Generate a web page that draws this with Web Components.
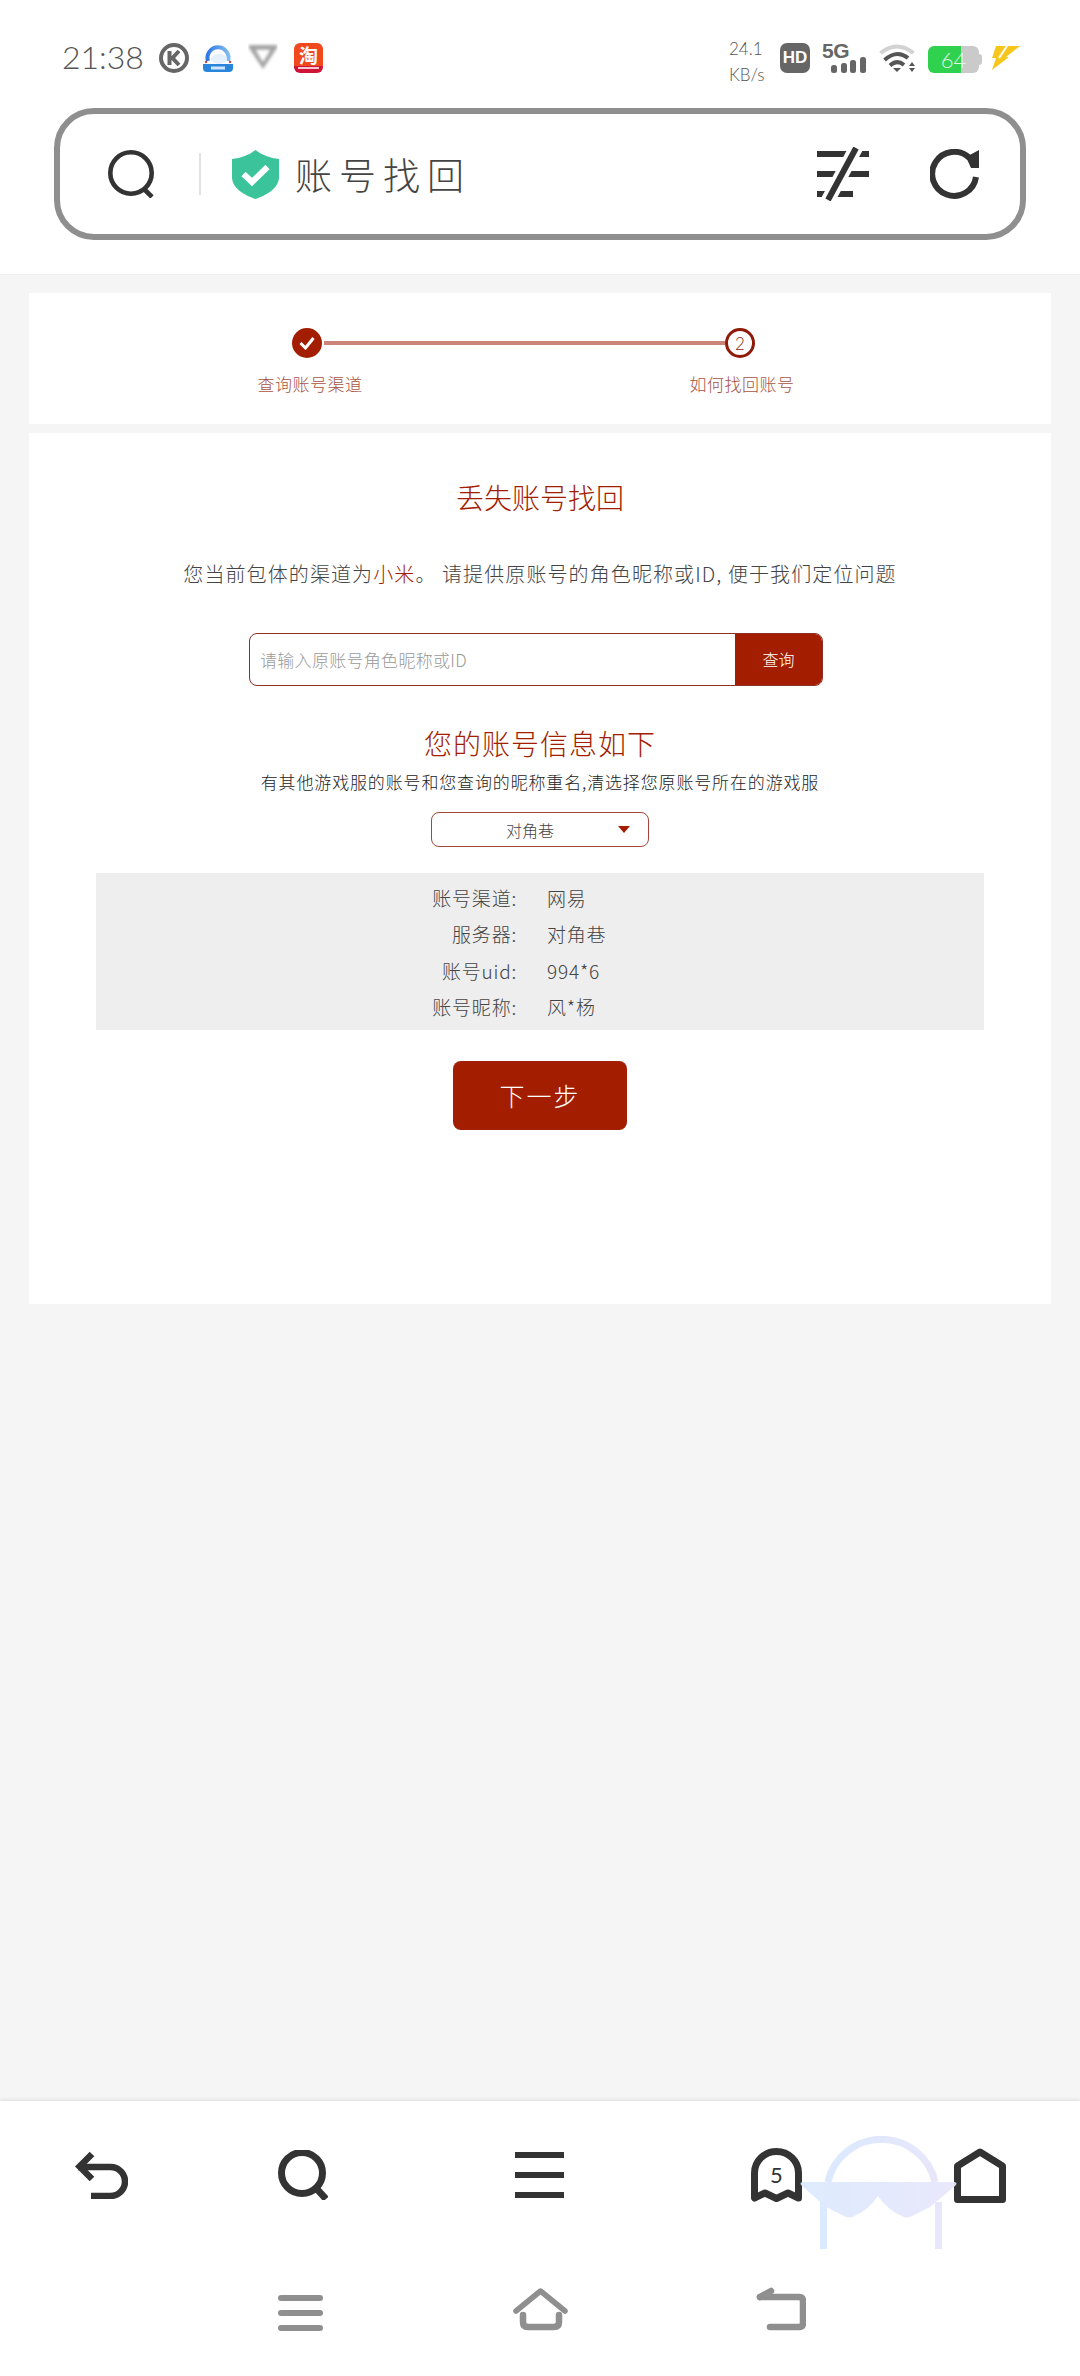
<!DOCTYPE html>
<html lang="zh-CN">
<head>
<meta charset="utf-8">
<title>账号找回</title>
<style>
  html, body { margin: 0; padding: 0; }
  body {
    width: 1080px;
    height: 2376px;
    overflow: hidden;
    background: #f5f5f5;
    font-family: "Noto Sans CJK SC", "Noto Sans", sans-serif;
    font-weight: 300;
    display: flex;
    flex-direction: column;
  }
</style>
</head>
<body>
<browser-header></browser-header>
<step-card></step-card>
<recover-card></recover-card>
<bottom-nav></bottom-nav>

<script>
class BrowserHeader extends HTMLElement {
  connectedCallback() {
    this.attachShadow({ mode: 'open' });
    this.shadowRoot.innerHTML = `
      <style>
        :host {
          display: block;
          height: 275px;
          background: #fff;
          border-bottom: 1px solid #f0f0f0;
          box-sizing: border-box;
        }
        .status {
          height: 108px;
          box-sizing: border-box;
          padding: 43px 60px 0 62px;
          display: flex;
          align-items: flex-start;
          color: #666;
        }
        .time {
          font: 300 32px/28px Lato, sans-serif;
          letter-spacing: 0;
          width: 97px;
          color: #555;
        }
        .status svg { display: block; flex: none; }
        .taobao {
          width: 29px;
          height: 30px;
          margin-left: 16px;
          border-radius: 6px;
          background: linear-gradient(#f0491e 0 76%, #cf1437 76%);
          color: #fff;
          font: 700 19px/23px "Noto Sans CJK SC", sans-serif;
          text-align: center;
        }
        .taobao i { display: block; height: 2px; margin: 1px 4px 0; background: #f5c9cf; }
        .grow { flex: 1; }
        .speed {
          width: 51px;
          margin-top: -7px;
          font: 300 17px/26px Lato, sans-serif;
          color: #555;
        }
        .hd {
          width: 30px;
          height: 30px;
          border-radius: 7px;
          background: #666;
          color: #fff;
          font: 700 17px/30px "Liberation Sans", sans-serif;
          text-align: center;
        }
        .net { width: 43px; margin-left: 12px; height: 30px; display: flex; flex-direction: column; }
        .net b { font: 700 21px/15px "Liberation Sans", sans-serif; letter-spacing: -.5px; }
        .net svg { margin: -1px 0 0 9px; }
        .battery {
          margin: 3px 0 0 12px;
          width: 51px;
          height: 27px;
          border-radius: 6px;
          background: linear-gradient(90deg, #2fd14e 0 33px, #cacaca 33px);
          color: #dff8e4;
          font: 300 22px/27px Lato, sans-serif;
          text-align: center;
          position: relative;
        }
        .battery::after {
          content: '';
          position: absolute;
          right: -3px;
          top: 8px;
          width: 3px;
          height: 11px;
          border-radius: 0 3px 3px 0;
          background: #cacaca;
        }
        .bar {
          margin: 0 54px;
          height: 132px;
          box-sizing: border-box;
          border: 6px solid #8f8f8f;
          border-radius: 40px;
          display: flex;
          align-items: center;
          padding-left: 48px;
        }
        .bar svg { display: block; flex: none; }
        .sep { width: 2px; height: 42px; background: #e2e2e2; margin: 0 31px 0 43px; flex: none; }
        .title {
          margin-left: 16px;
          font-size: 37px;
          line-height: 42px;
          letter-spacing: 7px;
          color: #444;
          flex: 1;
        }
      </style>
      <div class="status">
        <span class="time">21:38</span>
        <svg width="30" height="30" viewBox="0 0 30 30">
          <circle cx="15" cy="15" r="13" fill="none" stroke="#666" stroke-width="4"/>
          <path d="M10.500 8v14M20 8l-6.500 7 6.500 7" fill="none" stroke="#666" stroke-width="4"/>
        </svg>
        <svg style="margin-left:14px" width="30" height="30" viewBox="0 0 30 30">
          <defs>
            <linearGradient id="ring" x1="0" x2="1" y1="0" y2="0">
              <stop offset="0" stop-color="#2f79e6"/><stop offset="1" stop-color="#7fbcf0"/>
            </linearGradient>
          </defs>
          <path d="M5 18A10.500 10.500 0 1 1 25 18" fill="none" stroke="url(#ring)" stroke-width="4"/>
          <ellipse cx="16" cy="16" rx="8" ry="5" fill="#e4f0fb"/>
          <path d="M0 21h30v4q0 4-4 4H4q-4 0-4-4z" fill="#2a86dc"/>
          <path d="M8 25h14" stroke="#cfe6fa" stroke-width="3"/>
          <circle cx="3" cy="19" r="1.200" fill="#d6453a"/><circle cx="27" cy="19" r="1.200" fill="#d6453a"/>
        </svg>
        <svg style="margin-left:15px" width="30" height="28" viewBox="0 0 30 28">
          <filter id="soft"><feGaussianBlur stdDeviation="1.600"/></filter>
          <g filter="url(#soft)">
            <path d="M1 2h28v3L15 26 1 5z" fill="#a4a4a4"/>
            <path d="M8 7h14l-7 12z" fill="#fff"/>
          </g>
        </svg>
        <div class="taobao">淘<i></i></div>
        <span class="grow"></span>
        <div class="speed">24.1<br>KB/s</div>
        <div class="hd">HD</div>
        <div class="net">
          <b>5G</b>
          <svg width="35" height="16" viewBox="0 0 35 16" fill="#666">
            <rect x="0" y="8" width="6" height="8" rx="2.500"/>
            <rect x="10" y="6" width="6" height="10" rx="2.500"/>
            <rect x="19" y="3" width="6" height="13" rx="2.500"/>
            <rect x="29" y="0" width="6" height="16" rx="2.500"/>
          </svg>
        </div>
        <svg style="margin-left:14px" width="37" height="30" viewBox="0 0 37 30">
          <path d="M1.500 10Q18-3 34.500 10" fill="none" stroke="#d2d2d2" stroke-width="4"/>
          <path d="M5.500 17Q18 6 29 15" fill="none" stroke="#555" stroke-width="4"/>
          <path d="M11 22.500Q18 16 25 22" fill="none" stroke="#555" stroke-width="4"/>
          <path d="M14 25h8l-4 4zM30 23l3-4 3 4zM30 25h6l-3 4z" fill="#555"/>
        </svg>
        <div class="battery">64</div>
        <svg style="margin:2px 0 0 12px" width="29" height="26" viewBox="0 0 29 26">
          <path d="M5 1h24L15 12l3 0L1 25l4-12H1z" fill="#f6c61d"/>
          <path d="M16 1L8 13" stroke="#fff" stroke-width="2"/>
        </svg>
      </div>
      <div class="bar">
        <svg width="48" height="48" viewBox="0 0 48 48">
          <circle cx="23" cy="23" r="20.700" fill="none" stroke="#333" stroke-width="4.600"/>
          <path d="M35 38l9 9" stroke="#333" stroke-width="4.600"/>
        </svg>
        <span class="sep"></span>
        <svg width="47" height="49" viewBox="0 0 47 49">
          <path d="M23.500 0C30 5 38 8 47 9V27C47 38 35 45 23.500 49 12 45 0 38 0 27V9C9 8 17 5 23.500 0Z" fill="#3bc49b"/>
          <path d="M11.500 24l8.500 8 15.500-15" fill="none" stroke="#fff" stroke-width="6"/>
        </svg>
        <span class="title">账号找回</span>
        <svg width="52" height="54" viewBox="0 0 52 54">
          <path d="M0 7h52M0 27h52M0 47h36" stroke="#333" stroke-width="6"/>
          <path d="M39 1L11 53" stroke="#fff" stroke-width="14"/>
          <path d="M39 1L11 53" stroke="#333" stroke-width="6"/>
        </svg>
        <svg style="margin:0 40px 0 61px" width="50" height="50" viewBox="0 0 50 50">
          <path d="M46 28A22 22 0 1 1 39.500 9" fill="none" stroke="#333" stroke-width="6"/>
          <path d="M49 1V19H41L36 8Z" fill="#333"/>
        </svg>
      </div>
    `;
  }
}

class StepCard extends HTMLElement {
  connectedCallback() {
    this.attachShadow({ mode: 'open' });
    this.shadowRoot.innerHTML = `
      <style>
        :host {
          display: block;
          margin: 18px 29px 0;
          height: 131px;
          background: #fff;
          box-sizing: border-box;
          padding-top: 35px;
          color: #a85243;
          font-size: 17px;
        }
        .track {
          display: flex;
          align-items: center;
          padding-left: 263px;
        }
        .dot {
          width: 30px;
          height: 30px;
          box-sizing: border-box;
          border-radius: 50%;
          flex: none;
          display: flex;
          align-items: center;
          justify-content: center;
        }
        .done { background: #a31d00; }
        .next { border: 3px solid #8f1a08; color: #8f1a08; font: 300 17px/1 Lato, sans-serif; }
        .line { width: 401px; height: 4px; margin: 0 0 0 2px; background: #cc8479; }
        .labels {
          display: grid;
          grid-template-columns: 200px 200px;
          column-gap: 232px;
          padding-left: 181px;
          margin-top: 14px;
          line-height: 24px;
          text-align: center;
          letter-spacing: .5px;
        }
      </style>
      <div class="track">
        <span class="dot done">
          <svg width="16" height="14" viewBox="0 0 16 14"><path d="M1.500 7l5 5 8-10" fill="none" stroke="#fff" stroke-width="3"/></svg>
        </span>
        <span class="line"></span>
        <span class="dot next">2</span>
      </div>
      <div class="labels"><span>查询账号渠道</span><span>如何找回账号</span></div>
    `;
  }
}

class InfoTable extends HTMLElement {
  connectedCallback() {
    this.attachShadow({ mode: 'open' });
    const rows = [['账号渠道:', '网易'], ['服务器:', '对角巷'], ['账号uid:', '994*6'], ['账号昵称:', '风*杨']];
    this.shadowRoot.innerHTML = `
      <style>
        :host {
          display: grid;
          grid-template-columns: 421px 1fr;
          grid-auto-rows: 36.500px;
          column-gap: 30px;
          align-items: center;
          padding: 6px 0 5px;
          background: #eee;
          color: #444;
          font-size: 19px;
          letter-spacing: .8px;
          margin-top: 26px;
          text-align: left;
        }
        .k { text-align: right; }
      </style>
      ${rows.map(r => `<span class="k">${r[0]}</span><span>${r[1]}</span>`).join('')}
    `;
  }
}

class RecoverCard extends HTMLElement {
  connectedCallback() {
    this.attachShadow({ mode: 'open' });
    this.shadowRoot.innerHTML = `
      <style>
        :host {
          display: block;
          margin: 9px 29px 0;
          height: 871px;
          background: #fff;
          box-sizing: border-box;
          padding: 44px 67px 0;
          text-align: center;
          color: #444;
        }
        h1, h2, p { margin: 0; font-weight: 300; }
        h1 { font-size: 28px; line-height: 40px; color: #a31d00; }
        .lead { margin-top: 42px; font-size: 20px; line-height: 30px; color: #444; white-space: nowrap; letter-spacing: 1.100px; }
        .lead em { font-style: normal; color: #a31d00; }
        .query {
          margin: 44px 0 0 153px;
          width: 574px;
          height: 53px;
          display: flex;
          box-sizing: border-box;
          border: 1px solid #8f3024;
          border-radius: 8px;
          overflow: hidden;
          font-size: 17px;
        }
        .query span { flex: 1; text-align: left; padding-left: 10px; line-height: 51px; color: #999; letter-spacing: .3px; }
        .query b { width: 87px; background: #a31d00; color: #fff; font-weight: 300; line-height: 51px; font-size: 16px; }
        h2 { margin-top: 37px; font-size: 28px; line-height: 40px; color: #a31d00; letter-spacing: 1px; }
        .hint { margin-top: 7px; font-size: 17px; line-height: 24px; color: #222; white-space: nowrap; letter-spacing: .85px; }
        .pick {
          margin: 18px auto 0;
          width: 218px;
          height: 35px;
          box-sizing: border-box;
          border: 1px solid #a3473a;
          border-radius: 8px;
          display: flex;
          align-items: center;
          justify-content: space-between;
          padding: 0 18px 0 74px;
          font-size: 16px;
          color: #444;
        }
        .pick i { width: 0; height: 0; border: 6px solid transparent; border-top: 7px solid #a31d00; border-bottom: 0; }
        .go {
          margin: 31px auto 0;
          width: 174px;
          height: 69px;
          border-radius: 8px;
          background: #a31d00;
          color: #fff;
          font-size: 25px;
          line-height: 69px;
          letter-spacing: 2px;
        }
      </style>
      <h1>丢失账号找回</h1>
      <p class="lead">您当前包体的渠道为<em>小米</em>。 请提供原账号的角色昵称或ID, 便于我们定位问题</p>
      <div class="query"><span>请输入原账号角色昵称或ID</span><b>查询</b></div>
      <h2>您的账号信息如下</h2>
      <p class="hint">有其他游戏服的账号和您查询的昵称重名,清选择您原账号所在的游戏服</p>
      <div class="pick"><span>对角巷</span><i></i></div>
      <info-table></info-table>
      <div class="go">下一步</div>
    `;
  }
}

class BottomNav extends HTMLElement {
  connectedCallback() {
    this.attachShadow({ mode: 'open' });
    this.shadowRoot.innerHTML = `
      <style>
        :host {
          display: block;
          margin-top: auto;
          height: 275px;
          background: #fff;
          box-shadow: 0 -1px 4px rgba(0,0,0,.1);
          position: relative;
          box-sizing: border-box;
          padding-top: 44px;
        }
        svg { display: block; flex: none; }
        .top, .sys { display: flex; }
        .top { height: 60px; align-items: center; padding-left: 75px; }
        .sys { height: 60px; align-items: flex-end; margin-top: 66px; padding-left: 278px; }
        .ghost { position: relative; margin: 0 152px 0 187px; flex: none; }
        .ghost span {
          position: absolute;
          left: 0; right: 0; top: 14px;
          text-align: center;
          font: 400 22px/26px Lato, sans-serif;
          color: #333;
        }
        .shades { position: absolute; left: 800px; top: 35px; }
      </style>
      <div class="top">
        <svg width="53" height="48" viewBox="0 0 53 48" fill="none" stroke="#333" stroke-width="6.500">
          <path d="M3 16H35.500A14.500 14.500 0 0 1 35.500 45H16"/>
          <path d="M17 3L4.500 15.500 17 28"/>
        </svg>
        <svg style="margin-left:150px" width="50" height="50" viewBox="0 0 50 50" fill="none" stroke="#333" stroke-width="7">
          <circle cx="24" cy="23" r="20.500"/>
          <path d="M38 38l10 11"/>
        </svg>
        <svg style="margin-left:187px" width="49" height="46" viewBox="0 0 49 46" fill="#333">
          <rect y="0" width="49" height="6"/><rect y="20" width="49" height="6"/><rect y="40" width="49" height="6"/>
        </svg>
        <div class="ghost">
          <svg width="51" height="54" viewBox="0 0 51 54" fill="none" stroke="#333" stroke-width="7" stroke-linejoin="round">
            <path d="M3.500 50V25A22 21.500 0 0 1 47.500 25V50L37 45 25.500 50.500 14 45Z"/>
          </svg>
          <span>5</span>
        </div>
        <svg width="52" height="55" viewBox="0 0 52 55" fill="none" stroke="#333" stroke-width="7" stroke-linejoin="round">
          <path d="M3.500 18L26 4 48.500 18V51.500H3.500Z"/>
        </svg>
      </div>
      <div class="sys">
        <svg width="45" height="36" viewBox="0 0 45 36" fill="#8f8f8f">
          <rect y="0" width="45" height="6" rx="3"/><rect y="15" width="45" height="6" rx="3"/><rect y="30" width="45" height="6" rx="3"/>
        </svg>
        <svg style="margin-left:190px" width="56" height="44" viewBox="0 0 56 44" fill="none" stroke="#8f8f8f" stroke-width="5.500" stroke-linecap="round" stroke-linejoin="round">
          <path d="M3 24L27.500 4 52 24"/>
          <path stroke-width="6.500" d="M10 28V35Q10 40 15 40H41Q46 40 46 35V28"/>
        </svg>
        <svg style="margin-left:187px" width="50" height="44" viewBox="0 0 50 44" fill="none" stroke="#8f8f8f" stroke-width="6.500" stroke-linecap="round" stroke-linejoin="round">
          <path d="M4 10H43Q47 10 47 14V36Q47 40 43 40H14"/>
          <path d="M4 10L15 4"/>
        </svg>
      </div>
      <svg class="shades" width="157" height="113" viewBox="0 0 157 113">
        <defs>
          <linearGradient id="tint" x1="0" x2="1" y1="0" y2="0">
            <stop offset="0" stop-color="#dbe9fe"/><stop offset="1" stop-color="#e7e6fb"/>
          </linearGradient>
        </defs>
        <path d="M27.900 46A55 55 0 0 1 135.100 46" fill="none" stroke="url(#tint)" stroke-width="7"/>
        <path d="M23.500 66V113M138.500 66V113" fill="none" stroke="url(#tint)" stroke-width="7"/>
        <path d="M2 46H155Q158 47 155 50L130 71 110 81Q107 82 104 81 88 75 78 60 68 75 52 81 49 82 46 81L26 71 2 50Q-1 47 2 46Z" fill="url(#tint)" fill-opacity=".92"/>
      </svg>
    `;
  }
}

customElements.define('browser-header', BrowserHeader);
customElements.define('step-card', StepCard);
customElements.define('info-table', InfoTable);
customElements.define('recover-card', RecoverCard);
customElements.define('bottom-nav', BottomNav);
</script>
</body>
</html>
